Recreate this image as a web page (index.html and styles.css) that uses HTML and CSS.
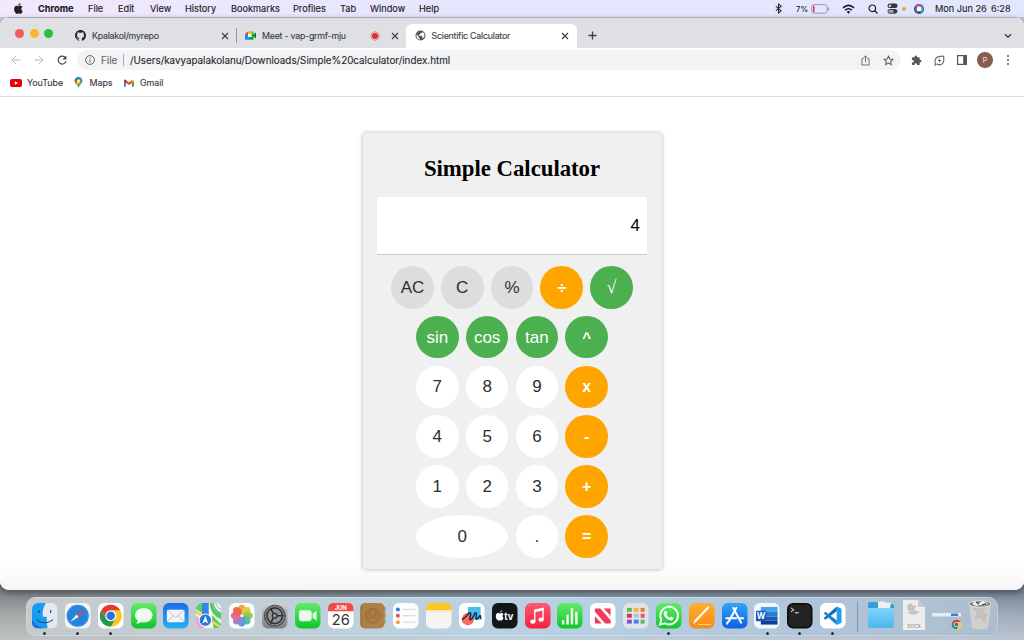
FILE: index.html
```html
<!DOCTYPE html>
<html lang="en">
<head>
<meta charset="utf-8">
<title>Scientific Calculator</title>
<link rel="stylesheet" href="styles.css">
</head>
<body>
<div class="desktop">
  <header class="menubar">
    <svg class="apple" viewBox="0 0 24 24"><path d="M17.2 12.800c0-2.500 2-3.700 2.100-3.800-1.200-1.700-3-1.900-3.600-1.900-1.500-.2-3 .9-3.700.9-.8 0-2-.9-3.200-.9-1.700 0-3.200 1-4.100 2.400-1.700 3-.4 7.500 1.300 10 .8 1.200 1.800 2.500 3.100 2.500 1.200-.1 1.700-.8 3.200-.8s1.900.8 3.200.8 2.200-1.200 3-2.400c1-1.400 1.300-2.700 1.400-2.800-.1 0-2.700-1-2.700-4zM14.700 5.500c.7-.8 1.200-2 1-3.200-1 .1-2.200.7-2.900 1.500-.6.7-1.200 1.900-1 3 1.100.1 2.200-.5 2.900-1.300z"/></svg>
    <nav class="menus"><b>Chrome</b><span>File</span><span>Edit</span><span>View</span><span>History</span><span>Bookmarks</span><span>Profiles</span><span>Tab</span><span>Window</span><span>Help</span></nav>
    <div class="status">
      <svg class="s-bt" viewBox="0 0 8 12"><path d="M1 3.500l6 5L4 11V1l3 2.500-6 5" fill="none" stroke="#222" stroke-width="1.200"/></svg>
      <span class="s-pct">7%</span>
      <svg class="s-bat" viewBox="0 0 19 10"><rect x=".6" y=".6" width="15.500" height="8.600" rx="2.500" fill="none" stroke="#99a" /><path d="M2 2h1.500v6H2z" fill="#f0284a"/><path d="M17.500 3.500v3" stroke="#99a" stroke-width="1.200"/></svg>
      <svg class="s-wifi" viewBox="0 0 14 11"><g fill="none" stroke="#16161c" stroke-width="1.800"><path d="M1 4.200Q7-1 13 4.200M3.300 6.700q3.700-3 7.400 0"/></g><path d="M5 8.500q2-1.500 4 0L7 10.600z" fill="#16161c"/></svg>
      <svg class="s-find" viewBox="0 0 10 10"><circle cx="4.300" cy="4.300" r="3.300" fill="none" stroke="#222" stroke-width="1.200"/><path d="M6.800 6.800L9.500 9.500" stroke="#222" stroke-width="1.300"/></svg>
      <svg class="s-cc" viewBox="0 0 11 11"><rect x=".5" y=".5" width="10" height="4.400" rx="2.200" fill="#333540"/><circle cx="2.900" cy="2.700" r="1.200" fill="#dde"/><rect x="1" y="6.500" width="9" height="3.700" rx="1.800" fill="#aab" stroke="#333540"/><circle cx="8" cy="8.300" r="1.700" fill="#333540"/></svg>
      <i class="s-dot"></i>
      <svg class="s-siri" viewBox="0 0 10 10"><circle cx="5" cy="5" r="5" fill="#463b75"/><path d="M1 3Q4-1 8 1.500L5 4Z" fill="#e65391"/><path d="M1 3Q0 7 4 9l1-4z" fill="#3778bd"/><path d="M8 1.500Q11 6 7 9L5 5z" fill="#38b9b1"/><circle cx="5" cy="5" r="2.400" fill="#fff"/></svg>
      <span class="s-date">Mon Jun 26</span><span class="s-time">6:28</span>
    </div>
  </header>

  <main class="window">
    <div class="tabs">
      <div class="lights"><i class="red"></i><i class="yellow"></i><i class="green"></i></div>
      <div class="tab tab-git">
        <svg class="fav" viewBox="0 0 16 16"><path fill="#24292f" d="M8 0C3.580 0 0 3.580 0 8c0 3.540 2.290 6.530 5.470 7.590.4.070.55-.17.550-.38v-1.490c-2.010.37-2.530-.49-2.690-.94-.09-.23-.48-.94-.82-1.130-.28-.15-.68-.52-.01-.53.63-.01 1.080.58 1.230.82.72 1.210 1.870.87 2.330.66.07-.52.28-.87.510-1.070-1.780-.2-3.640-.89-3.640-3.950 0-.87.31-1.590.82-2.150-.08-.2-.36-1.020.08-2.120 0 0 .67-.21 2.200.82a7.600 7.600 0 0 1 4 0c1.530-1.040 2.200-.82 2.200-.82.44 1.100.16 1.920.08 2.120.51.56.82 1.270.82 2.150 0 3.070-1.870 3.750-3.650 3.950.29.25.54.73.54 1.480v2.200c0 .21.15.46.55.38A8 8 0 0 0 16 8c0-4.420-3.580-8-8-8z"/></svg>
        <span class="tt">Kpalakol/myrepo</span>
        <svg class="x" viewBox="0 0 8 8"><path d="M1 1l6 6M7 1L1 7"/></svg>
      </div>
      <div class="tab tab-meet">
        <svg class="fav" viewBox="0 0 14 12"><path d="M0 4l4-3.500v3.500z" fill="#ea4335"/><path d="M4 .5h5.500v3.500H4z" fill="#fbbc04"/><path d="M9.500.5q1.500 0 1.500 1.500v8q0 1.500-1.500 1.500H4V8h4V4h1.500z" fill="#00ac47"/><path d="M10 6l4-4v8z" fill="#00832d"/><path d="M0 4h4v7.500H1.200Q0 11.500 0 10z" fill="#2684fc"/><path d="M4 4h4.300v4H4z" fill="#fff"/></svg>
        <span class="tt">Meet - vap-grmf-mju</span>
        <svg class="rec" viewBox="0 0 10 10"><circle cx="5" cy="5" r="4.200" fill="none" stroke="#e4736c" stroke-width=".9"/><circle cx="5" cy="5" r="3" fill="#d82d25"/></svg>
        <svg class="x" viewBox="0 0 8 8"><path d="M1 1l6 6M7 1L1 7"/></svg>
      </div>
      <div class="tab tab-calc">
        <svg class="fav" viewBox="0 0 24 24"><path fill="#53575b" d="M12 1a11 11 0 1 0 0 22 11 11 0 0 0 0-22zm-1 19.900A9 9 0 0 1 3.200 10L8 14.500v1.200c0 1.200 1 2.200 2.200 2.200zm7.500-3c-.3-.8-1-1.400-2-1.400h-1v-3c0-.6-.4-1-1-1H8v-2h2.200c.6 0 1-.5 1-1V7.200h2c1.200 0 2.200-1 2.200-2.200V3.800A9 9 0 0 1 18.500 17.900z"/></svg>
        <span class="tt">Scientific Calculator</span>
        <svg class="x" viewBox="0 0 8 8"><path d="M1 1l6 6M7 1L1 7"/></svg>
      </div>
      <svg class="plus" viewBox="0 0 10 10"><path d="M5 .5v9M.5 5h9"/></svg>
      <svg class="chev" viewBox="0 0 8 6"><path d="M1 1.200l3 3 3-3"/></svg>
    </div>

    <div class="toolbar">
      <svg class="nav" viewBox="0 0 10 10"><path d="M9.500 5H1M5 1L1 5l4 4" fill="none" stroke="#b5b7ba"/></svg>
      <svg class="nav" viewBox="0 0 10 10"><path d="M.5 5H9M5 1l4 4-4 4" fill="none" stroke="#b5b7ba"/></svg>
      <svg class="nav" viewBox="0 0 10 10"><path d="M8.600 3A4 4 0 1 0 9 6.200" fill="none" stroke="#45484c" stroke-width="1.200"/><path d="M9.400.4v4H5.400z" fill="#45484c"/></svg>
      <div class="omnibox">
        <svg class="info" viewBox="0 0 10 10"><circle cx="5" cy="5" r="4.400" fill="none" stroke="#5f6368"/><path d="M5 4.400v3M5 2.400v1.100" stroke="#5f6368" stroke-width="1.100"/></svg>
        <span class="scheme">File</span><i class="bar"></i><span class="url">/Users/kavyapalakolanu/Downloads/Simple%20calculator/index.html</span>
        <svg class="share" viewBox="0 0 10 12"><path d="M3 4H1v7h8V4H7M5 8V1M2.800 3L5 .9 7.200 3" fill="none" stroke="#63676b"/></svg>
        <svg class="star" viewBox="0 0 24 24"><path d="M12 2.500l2.900 6.300 6.800.7-5.100 4.600 1.500 6.800-6.100-3.500-6.100 3.500 1.500-6.800-5.100-4.600 6.800-.7z" fill="none" stroke="#56595d" stroke-width="2.200"/></svg>
      </div>
      <svg class="ext" viewBox="0 0 24 24"><path fill="#53565a" d="M20.500 11H19V7a2 2 0 0 0-2-2h-4V3.500a2.500 2.500 0 0 0-5 0V5H4a2 2 0 0 0-2 2v3.800h1.500a2.700 2.700 0 0 1 0 5.400H2V20c0 1.100.9 2 2 2h3.800v-1.500a2.700 2.700 0 0 1 5.400 0V22H17a2 2 0 0 0 2-2v-4h1.500a2.500 2.500 0 0 0 0-5z"/></svg>
      <svg class="leaf" viewBox="0 0 12 12"><path d="M1.500 10.500Q0 3 5 1.800q3-.8 5.500-.5.8 5-.5 7.200-2.500 3.700-7 1.300M.6 11.500l2-2" fill="none" stroke="#63666a" stroke-width="1.200"/><path d="M6.600 3L4 6.500h2L5.300 9 8 5.500H6z" fill="#63666a"/></svg>
      <svg class="side" viewBox="0 0 10 10"><rect x=".6" y=".6" width="8.800" height="8.800" fill="none" stroke="#505358" stroke-width="1.200"/><path d="M6.200 0H10v10H6.200z" fill="#505358"/></svg>
      <span class="avatar">P</span>
      <svg class="dots" viewBox="0 0 4 12"><g fill="#505358"><circle cx="2" cy="2" r="1"/><circle cx="2" cy="6" r="1"/><circle cx="2" cy="10" r="1"/></g></svg>
    </div>

    <div class="bookmarks">
      <svg class="yt" viewBox="0 0 12 8"><rect width="12" height="8" rx="2" fill="#e90000"/><path d="M4.800 2.200v3.600L8 4z" fill="#fff"/></svg><span class="b-yt">YouTube</span>
      <svg class="gm" viewBox="0 0 10 12"><path d="M5 0a4.300 4.300 0 0 0-4.300 4.500C.8 7.300 4 8.200 5 12 6 8.200 9.200 7.300 9.300 4.500A4.300 4.300 0 0 0 5 0z" fill="#34a853"/><path d="M1.700 1.700A4.300 4.300 0 0 1 5 0l1.500.3L3.300 4z" fill="#1a73e8"/><path d="M1.700 1.700L3.400 3.300 1.500 7A5 5 0 0 1 1.700 1.700z" fill="#ea4335"/><path d="M1.500 7l5-5 1 4-4.200 3z" fill="#fbbc04"/><path d="M6.500.3A4.300 4.300 0 0 1 9 3L6 6z" fill="#4285f4"/><circle cx="5" cy="4.200" r="1.500" fill="#fff"/></svg><span class="b-gm">Maps</span>
      <svg class="ml" viewBox="0 0 12 9"><path d="M0 1.500L2.500 3v6H.8Q0 9 0 8z" fill="#4285f4"/><path d="M9.500 3L12 1.500V8q0 1-.8 1H9.500z" fill="#34a853"/><path d="M2.500 1L6 3.800 9.500 1v3.400L6 7 2.500 4.400z" fill="#ea4335"/><path d="M0 1.500Q.3-.8 2.500 1v3.400L0 2.700z" fill="#b82c23"/><path d="M9.500 1Q11.700-.8 12 1.500v1.200L9.500 4.400z" fill="#fbbc04"/></svg><span>Gmail</span>
    </div>

    <section class="page">
      <div class="calculator">
        <h1>Simple Calculator</h1>
        <div class="display">4</div>
        <div class="keys">
          <div class="row"><button class="fn">AC</button><button class="fn">C</button><button class="fn">%</button><button class="op">÷</button><button class="sci root">√</button></div>
          <div class="row"><button class="sci">sin</button><button class="sci">cos</button><button class="sci">tan</button><button class="sci pow">^</button></div>
          <div class="row"><button>7</button><button>8</button><button>9</button><button class="op">x</button></div>
          <div class="row"><button>4</button><button>5</button><button>6</button><button class="op">-</button></div>
          <div class="row"><button>1</button><button>2</button><button>3</button><button class="op">+</button></div>
          <div class="row"><button class="zero">0</button><button>.</button><button class="op">=</button></div>
        </div>
      </div>
    </section>
  </main>

  <svg width="0" height="0" class="defs">
    <defs>
      <linearGradient id="gGreen" x2="0" y2="1"><stop stop-color="#62ec68"/><stop offset="1" stop-color="#10c52b"/></linearGradient>
      <linearGradient id="gBlue" x2="0" y2="1"><stop stop-color="#1c6deb"/><stop offset="1" stop-color="#27b0f5"/></linearGradient>
      <linearGradient id="gApp" x2="0" y2="1"><stop stop-color="#2aa7f5"/><stop offset="1" stop-color="#145de2"/></linearGradient>
      <linearGradient id="gRed" x2="0" y2="1"><stop stop-color="#fb5a73"/><stop offset="1" stop-color="#f91f3d"/></linearGradient>
      <linearGradient id="gOr" x2="0" y2="1"><stop stop-color="#ffb02b"/><stop offset="1" stop-color="#fa8918"/></linearGradient>
      <linearGradient id="gGray" x2="0" y2="1"><stop stop-color="#d3d3d3"/><stop offset="1" stop-color="#7b7d80"/></linearGradient>
      <linearGradient id="gFold" x2="0" y2="1"><stop stop-color="#7cd5fb"/><stop offset="1" stop-color="#4fb5ec"/></linearGradient>
      <clipPath id="tile"><rect width="26" height="26" rx="6"/></clipPath>
      <g id="chrome"><circle r="10" fill="#fff"/><path d="M0 0L-8.660-5A10 10 0 0 1 8.660-5z" fill="#e33b2e"/><path d="M0 0L8.660-5A10 10 0 0 1 0 10z" fill="#fcc620"/><path d="M0-5h8.700L4.300 2.500z" fill="#fcc620"/><path d="M-8.660-5l4.330 7.500L0-5z" fill="#e33b2e"/><path d="M-8.660-5L-4.330 2.500 4.330 2.500 0 10A10 10 0 0 1-8.660-5z" fill="#279847"/><circle r="5" fill="#fff"/><circle r="3.900" fill="#2474e5"/></g>
    </defs>
  </svg>

  <footer class="dock">
    <div class="app run"><svg viewBox="0 0 26 26"><g clip-path="url(#tile)"><path d="M0 0h26v26H0z" fill="#e4e9ef"/><path d="M0 0h14q-4 7-3 14h4q-.5 6 1 12H0z" fill="#1b9af4"/><path d="M0 17q6 9 15 9H0z" fill="#1372db"/><path d="M7 7.500v2.500M19 7.500v2.500" stroke="#15334f" stroke-width="1.200"/><path d="M4.500 17q8.500 6.500 17 0" fill="none" stroke="#17406a" stroke-width="1"/></g></svg></div>
    <div class="app run"><svg viewBox="0 0 26 26"><rect width="26" height="26" rx="6" fill="#f1f3f5"/><circle cx="13" cy="13" r="11.300" fill="#2383df"/><circle cx="13" cy="13" r="10" fill="none" stroke="#62b6ef" stroke-width="1" stroke-dasharray=".5 1.500"/><path d="M21 6.500l-7.200 7.700-2-2.600z" fill="#f14436"/><path d="M5 19.500l6.800-7.900 2 2.600z" fill="#f5f5f5"/></svg></div>
    <div class="app run"><svg viewBox="0 0 26 26"><rect width="26" height="26" rx="6" fill="#fff"/><use href="#chrome" transform="translate(13 13) scale(1.120)"/></svg></div>
    <div class="app"><svg viewBox="0 0 26 26"><rect width="26" height="26" rx="6" fill="url(#gGreen)"/><ellipse cx="13" cy="12.500" rx="9" ry="7.500" fill="#eefaee"/><path d="M7 17q0 3-2 4 4 0 5.500-2z" fill="#eefaee"/></svg></div>
    <div class="app"><svg viewBox="0 0 26 26"><rect width="26" height="26" rx="6" fill="url(#gBlue)"/><rect x="4" y="7" width="18" height="12.500" rx="1.500" fill="#f3f5f7"/><path d="M4.500 7.500L13 15l8.500-7.500M4.500 19l6-6.300M21.500 19l-6-6.300" fill="none" stroke="#a7b3bf" stroke-width=".8"/></svg></div>
    <div class="app"><svg viewBox="0 0 26 26"><g clip-path="url(#tile)"><path d="M0 0h26v26H0z" fill="#f3f2ed"/><path d="M0 0h6v10L0 6z" fill="#58cf67"/><path d="M14 0h4q2 8 8 10v7Q14 12 14 0z" fill="#51cb63"/><path d="M16 12l10 10v4h-8z" fill="#5acd64"/><path d="M0 13l8 6v7H0z" fill="#f1a0ce"/><path d="M17 0q1 8 9 10M20 0q1 5 6 7" stroke="#a9b4b8" fill="none"/><path d="M6 0h7v13H6z" fill="#3485e5"/><path d="M0 7l26 17v2L0 11z" fill="#fad25e"/><circle cx="9.500" cy="17.500" r="6.300" fill="#2477de" stroke="#fff"/><path d="M9.500 13l3 8-3-2-3 2z" fill="#fff"/></g></svg></div>
    <div class="app"><svg viewBox="0 0 26 26"><rect width="26" height="26" rx="6" fill="#fcfcfc"/><g transform="translate(13 13)" opacity=".9"><ellipse cy="-6.300" rx="4" ry="4.900" fill="#f89a22"/><ellipse cy="-6.300" rx="4" ry="4.900" fill="#dbc928" transform="rotate(45)"/><ellipse cy="-6.300" rx="4" ry="4.900" fill="#84c83d" transform="rotate(90)"/><ellipse cy="-6.300" rx="4" ry="4.900" fill="#48b996" transform="rotate(135)"/><ellipse cy="-6.300" rx="4" ry="4.900" fill="#518fd8" transform="rotate(180)"/><ellipse cy="-6.300" rx="4" ry="4.900" fill="#9b72bf" transform="rotate(225)"/><ellipse cy="-6.300" rx="4" ry="4.900" fill="#dd6388" transform="rotate(270)"/><ellipse cy="-6.300" rx="4" ry="4.900" fill="#ef5640" transform="rotate(315)"/></g></svg></div>
    <div class="app"><svg viewBox="0 0 26 26"><rect width="26" height="26" rx="6" fill="url(#gGray)"/><circle cx="13" cy="13" r="10.500" fill="#929497" stroke="#3d3f42" stroke-width="1.600" stroke-dasharray="1.200 .5"/><circle cx="13" cy="13" r="8" fill="#929497" stroke="#303235" stroke-width="1.600"/><circle cx="13" cy="13" r="2.500" fill="none" stroke="#303235" stroke-width="1.300"/><path d="M15.500 13h6.500M11.500 10.500L8.500 5M11.500 15.500l-3 5.500" stroke="#303235" stroke-width="1.600"/></svg></div>
    <div class="app"><svg viewBox="0 0 26 26"><rect width="26" height="26" rx="6" fill="url(#gGreen)"/><rect x="4" y="7.500" width="13" height="11" rx="2.500" fill="#edf9ec"/><path d="M18 11l4-3v10l-4-3z" fill="#edf9ec"/></svg></div>
    <div class="app"><svg viewBox="0 0 26 26"><rect width="26" height="26" rx="6" fill="#fff"/><path d="M6 0h14q6 0 6 6v2.500H0V6q0-6 6-6z" fill="#f24b42"/><text x="13" y="6.800" text-anchor="middle" class="cal-m">JUN</text><text x="13" y="22" text-anchor="middle" class="cal-d">26</text></svg></div>
    <div class="app"><svg viewBox="0 0 26 26"><path d="M24 4h2v5h-2z" fill="#8b9299"/><path d="M24 10h2v5h-2z" fill="#c98d48"/><path d="M24 16h2v5h-2z" fill="#8fa282"/><rect width="25" height="26" rx="5" fill="#b08147"/><path d="M2 2v22" stroke="#9d713b"/><circle cx="13" cy="13" r="7.500" fill="#a7783f" stroke="#956a35"/><circle cx="13" cy="10.500" r="2.800" fill="#b08147" stroke="#956a35" stroke-width=".6"/><path d="M8 18q5-6.500 10 0-5 4-10 0z" fill="#b08147" stroke="#956a35" stroke-width=".6"/></svg></div>
    <div class="app"><svg viewBox="0 0 26 26"><rect width="26" height="26" rx="6" fill="#fdfdfd"/><path d="M10 6.500h13M10 13h13M10 19.500h13" stroke="#c7c9cc" stroke-width=".8"/><circle cx="5" cy="6.500" r="2" fill="#2878e5"/><circle cx="5" cy="13" r="2" fill="#e74e4a"/><circle cx="5" cy="19.500" r="2" fill="#f69b37"/></svg></div>
    <div class="app"><svg viewBox="0 0 26 26"><rect width="26" height="26" rx="6" fill="#f6f5f1"/><path d="M6 0h14q6 0 6 6v1.500H0V6q0-6 6-6z" fill="#fdc720"/><path d="M1 9h24" stroke="#bbb6aa" stroke-width=".6" stroke-dasharray=".7 .7"/></svg></div>
    <div class="app"><svg viewBox="0 0 26 26"><rect width="26" height="26" rx="6" fill="#fff"/><path d="M9 4h13v13H9z" fill="#45c0ec"/><circle cx="9" cy="16.500" r="6.200" fill="#f96c56"/><path d="M3 17c5-2 6-7 8-7 3 0-2 8 1 7 3-1 3-7 5-7s-1 7 1 6.500c2 0 2-3.500 3.500-3.500s-1 3 1.500 3" fill="none" stroke="#14294e" stroke-width="1.500"/></svg></div>
    <div class="app"><svg viewBox="0 0 26 26"><rect width="26" height="26" rx="6" fill="#101719"/><path d="M10.600 14.300c0-1.300.9-1.900 1-2-.7-.9-1.600-1-1.900-1-.8 0-1.500.5-1.900.5s-1-.5-1.600-.5c-3.500.2-3.200 6 0 7.600.7.300 1-.3 1.700-.3s1 .5 1.700.3c.9-.2 1.700-1.600 1.900-2.500-.6-.3-.9-1-.9-2.100zM8 10.900q.2-2 2-2.500 0 2-2 2.500z" fill="#fff" transform="translate(.2 -1)"/><text x="12.500" y="17" class="tv">tv</text></svg></div>
    <div class="app"><svg viewBox="0 0 26 26"><rect width="26" height="26" rx="6" fill="url(#gRed)"/><path d="M10 6.500l9-2v3l-9 2z" fill="#fff"/><path d="M10 7v12M18.400 5v12" stroke="#fff" stroke-width="1.300"/><ellipse cx="8" cy="19" rx="2.700" ry="2.100" fill="#fff"/><ellipse cx="16.400" cy="17" rx="2.700" ry="2.100" fill="#fff"/></svg></div>
    <div class="app"><svg viewBox="0 0 26 26"><rect width="26" height="26" rx="6" fill="url(#gGreen)"/><path d="M5 17.500h2.500V22H5zM9.500 12H12v10H9.500zM14 5h2.500v17H14zM18.500 9H21v13h-2.500z" fill="#effdec"/></svg></div>
    <div class="app"><svg viewBox="0 0 26 26"><rect width="26" height="26" rx="6" fill="#fff"/><path d="M5 5.500h5.500L21 17.500v3.500h-5.500L5 9z" fill="#f03b59"/><path d="M14 5.500h7V13zM5 13.500l7 7.500H5z" fill="#f03b59"/></svg></div>
    <div class="app"><svg viewBox="0 0 26 26"><rect width="26" height="26" rx="6" fill="#e0e4e8"/><path d="M4 5h5v4H4z" fill="#53bd58"/><path d="M11 5h5v4h-5z" fill="#f6b52e"/><path d="M18 5h4v4h-4z" fill="#e37b32"/><path d="M4 11h5v4H4z" fill="#d33943"/><path d="M11 11h5v4h-5z" fill="#b9c2c8"/><path d="M18 11h4v4h-4z" fill="#f54e7a"/><path d="M4 17h5v4H4z" fill="#8c4bd9"/><path d="M11 17h5v4h-5z" fill="#3985ec"/><path d="M18 17h4v4h-4z" fill="#54bf53"/></svg></div>
    <div class="app run"><svg viewBox="0 0 26 26"><rect width="26" height="26" rx="6" fill="url(#gGreen)"/><path d="M4 22l1.400-5A9 9 0 1 1 9 20.700z" fill="none" stroke="#fff" stroke-width="1.900"/><path d="M9 8.200q1.300-1 2 .5l.7 1.800-1 1.300q1 2.300 3.400 3.200l1.200-1.300 2.700 1.300q-.2 3-3.200 2.700-6-1.300-7-7 .1-1.500 1.200-2.500z" fill="#fff"/></svg></div>
    <div class="app"><svg viewBox="0 0 26 26"><rect width="26" height="26" rx="6" fill="url(#gOr)"/><path d="M20.500 4.500L8 18l-3 3 1-3.500L19 4z" fill="#fff" stroke="#fff" stroke-width=".8"/><path d="M9 22h13" stroke="#ffd7a0"/></svg></div>
    <div class="app"><svg viewBox="0 0 26 26"><rect width="26" height="26" rx="6" fill="url(#gApp)"/><path d="M14.500 5L7 18.500M11.500 5l8 15M4.500 15.500h10M18.500 15.500h3M6 19.500l-.8 1.500" stroke="#fff" stroke-width="2.100" stroke-linecap="round"/></svg></div>
    <div class="app run"><svg viewBox="0 0 26 26"><rect width="26" height="26" rx="6" fill="#f4f7fb"/><path d="M7 4h17v5H7z" fill="#41a5ee"/><path d="M7 9h17v5H7z" fill="#2b7cd3"/><path d="M7 14h17v4H7z" fill="#185abd"/><path d="M7 18h17v4H7z" fill="#103f91"/><rect x="2" y="8" width="10.500" height="10.500" rx="1" fill="#185abd"/><text x="7.200" y="16.200" text-anchor="middle" class="word">W</text></svg></div>
    <div class="app run"><svg viewBox="0 0 26 26"><rect x=".8" y=".8" width="24.400" height="24.400" rx="5.500" fill="#232323" stroke="#0c0c0c" stroke-width="1.600"/><path d="M4 5l3 2-3 2M8 10h4" fill="none" stroke="#f2f2f2" stroke-width="1"/></svg></div>
    <div class="app run"><svg viewBox="0 0 26 26"><rect width="26" height="26" rx="6" fill="#fff"/><path d="M17 3.500l5 2.300v14.400l-5 2.300z" fill="#2a9df0"/><path d="M17 3.500L3.700 15.500l1.800 1.700L17 8.500z" fill="#0f6cb6"/><path d="M17 22.500L3.700 10.500l1.800-1.700L17 17.500z" fill="#1583d0"/></svg></div>
    <i class="sep"></i>
    <div class="app big"><svg viewBox="0 0 28 30"><path d="M1 4q0-2 2-2h7l2 2h13q2 0 2 2v3H1z" fill="#319fd6"/><path d="M11 2l6-1v7h-6zM17 2l7 1-1 5h-6z" fill="#eef0f0"/><path d="M1 8h26v18q0 2-2 2H3q-2 0-2-2z" fill="url(#gFold)"/></svg></div>
    <div class="app big"><svg viewBox="0 0 28 30"><path d="M3 0h15l7 7v23H3z" fill="#ededeb"/><path d="M18 0v7h7z" fill="#c9c9c7"/><path d="M7 5l4-2 3 3 3-1-3 5-6 1zM7 13l6-3 7 2-6 3z" fill="#c3c5c4"/><text x="14" y="27.500" text-anchor="middle" class="docx">DOCX</text></svg></div>
    <div class="app big"><svg viewBox="0 0 28 30"><path d="M-1 13h29v3.500H-1z" fill="#e5ebf2"/><path d="M18 13.500h7v2.500h-7z" fill="#387ddf"/><use href="#chrome" transform="translate(23.500 24.500) scale(.5)"/></svg></div>
    <div class="app big"><svg viewBox="0 0 28 30"><path d="M3 3h22l-3 25q-8 3-16 0z" fill="#d0d0ce"/><path d="M6 8l5 5-3 7 6-3 5 7 2-10-4-3 4-4z" fill="#bcbab7" opacity=".7"/><ellipse cx="14" cy="4" rx="11" ry="3.200" fill="#777873" stroke="#e7e8e8"/><path d="M6 4l3-3 4 2 4-2 5 3-4 2-4-1-4 1z" fill="#f2f0ed"/><path d="M10 2l3 2M16 5l4-1" stroke="#493e38" stroke-width="1.500"/></svg></div>
  </footer>
</div>
</body>
</html>
```
FILE: styles.css
```css
* { box-sizing: border-box; }
body { margin: 0; font-family: Inter, "Liberation Sans", sans-serif; }
svg { display: block; flex: none; overflow: visible; }
.desktop {
  width: 1024px; height: 640px; overflow: hidden; display: flex; flex-direction: column;
  background:
    linear-gradient(#e9ddf5, #b9a9c4) 0 0 / 100% 30px no-repeat,
    linear-gradient(rgba(60,70,80,.5), rgba(60,70,80,0) 55%, rgba(255,255,255,.3)) 0 585px / 100% 55px no-repeat,
    linear-gradient(90deg, #a5a9a9, #a8b3b9 25%, #a7bfce 50%, #a2b4c4 75%, #a0acbd);
}

/* menu bar */
.menubar { height: 17px; flex: none; display: flex; align-items: center; background: linear-gradient(90deg, #f2e9fc, #e6e6fd 40%, #e2e7fe); color: #1c1a24; font-size: 9.2px; }
.apple { width: 13px; height: 13px; margin-left: 12px; fill: #222; }
.menus { margin-left: 13px; display: grid; grid-template-columns: 50px 30px 32px 35px 46px 62px 47px 30px 49px 40px; white-space: nowrap; -webkit-text-stroke: .15px #1c1a24; }
.menus b { font-weight: 700; font-size: 9.2px; }
.status { margin-left: auto; margin-right: 14px; display: flex; align-items: center; white-space: nowrap; -webkit-text-stroke: .1px #1c1a24; }
.s-bt { width: 7px; height: 11px; margin-right: 14px; }
.s-pct { font-size: 7.800px; width: 15px; }
.s-bat { width: 19px; height: 10px; margin-right: 12px; }
.s-wifi { width: 13px; height: 10px; margin-right: 13px; }
.s-find { width: 10px; height: 10px; margin-right: 9px; }
.s-cc { width: 11px; height: 11px; margin-right: 4px; }
.s-dot { width: 4px; height: 4px; border-radius: 50%; background: #e4a650; margin-right: 8px; }
.s-siri { width: 10px; height: 10px; margin-right: 11px; }
.s-date { width: 56px; }
.s-time { width: 19px; }

/* browser window */
.window { height: 573px; flex: none; display: flex; flex-direction: column; background: #fff; border-radius: 9px; overflow: hidden; box-shadow: 0 3px 6px rgba(30,35,45,.5); }
.tabs { height: 31px; flex: none; display: flex; align-items: stretch; background: #dfe0e4; border-top: 1px solid #a9a8b4; font-size: 8.800px; letter-spacing: -.22px; color: #3c3f43; -webkit-text-stroke: .12px #3c3f43; }
.lights { display: flex; gap: 5.500px; padding: 11px 0 0 15px; width: 75px; }
.lights i { width: 9px; height: 9px; border-radius: 50%; }
.red { background: #f35b54; }
.yellow { background: #f7b731; }
.green { background: #27c13f; }
.tab { display: flex; align-items: center; padding-top: 5px; white-space: nowrap; }
.tab .x { width: 8px; height: 8px; margin-left: auto; }
.x path, .plus path, .chev path { fill: none; stroke: #3c4043; stroke-width: 1.200; }
.tab-git { width: 154px; }
.fav { width: 11px; height: 11px; margin-right: 6px; }
.tab-meet { width: 170px; margin-left: 7px; padding-left: 9px; padding-right: 7px; background: linear-gradient(#969aa0, #969aa0) 0 10px / 1px 15px no-repeat; }
.tab-meet .rec { width: 10px; height: 10px; margin-left: auto; }
.tab-meet .x { margin-left: 11px; }
.tab-calc { width: 171px; margin-top: 6px; padding: 0 8px 1px 9px; background: #fff; border-radius: 6px 6px 0 0; }
.tab-calc .fav { margin-right: 5.500px; }
.plus { width: 9px; height: 9px; margin: 13px 0 0 11px; }
.chev { width: 8px; height: 6px; margin: 15px 12px 0 auto; }
.plus path, .chev path { stroke-width: 1.500; }
.toolbar { height: 25px; flex: none; display: flex; align-items: center; padding-left: 10.500px; padding-bottom: .8px; }
.nav { width: 10px; height: 10px; margin-right: 13px; }
.nav:nth-child(3) { margin-right: 10.500px; }
.omnibox { width: 824px; height: 20px; border-radius: 10px; background: #f1f3f4; display: flex; align-items: center; padding: 0 7px 0 8px; font-size: 9.830px; color: #27292c; white-space: nowrap; -webkit-text-stroke: .12px #27292c; }
.info { width: 10px; height: 10px; margin-right: 6px; }
.scheme { width: 22px; color: #63676b; -webkit-text-stroke-color: #63676b; }
.bar { width: 1px; height: 12px; background: #a9acb0; margin-right: 6px; }
.share { width: 9px; height: 11px; margin-left: auto; margin-right: 13px; }
.star { width: 11px; height: 11px; }
.ext { width: 11px; height: 11px; margin-left: 10px; }
.leaf { width: 11px; height: 11px; margin-left: 12px; }
.side { width: 10px; height: 10px; margin-left: 12px; }
.avatar { width: 16px; height: 16px; margin-left: 10px; border-radius: 50%; background: #845e51; color: #f4dcd2; font-size: 8px; line-height: 16px; text-align: center; }
.dots { width: 4px; height: 12px; margin-left: 12.500px; }
.bookmarks { height: 24px; flex: none; display: flex; align-items: center; padding-left: 10px; padding-bottom: 4px; border-bottom: 1px solid #dcdddf; font-size: 8.900px; letter-spacing: -.05px; color: #33363a; -webkit-text-stroke: .1px #33363a; }
.yt { width: 12px; height: 8px; margin-right: 5px; }
.b-yt { width: 47px; }
.gm { width: 9px; height: 11px; margin-right: 6.500px; }
.b-gm { width: 34px; }
.ml { width: 10px; height: 8px; margin-right: 6.500px; }

/* calculator page */
.page { flex: 1; padding-top: 35.500px; background: linear-gradient(#fff 94%, #f5f5f5); }
.calculator { width: 299px; height: 436px; margin: 0 auto; padding: 14.500px; background: #f0f0f0; border-radius: 3.500px; box-shadow: 0 0 4px rgba(0,0,0,.32); display: flex; flex-direction: column; }
h1 { margin: 7px 0 14px; height: 29px; font: bold 22.800px/29px "Liberation Serif", serif; letter-spacing: -.03px; text-align: center; color: #000; }
.display { height: 58px; flex: none; background: #fff; border-bottom: 1px solid #ccc; padding-right: 7px; font: 17px/57px "Liberation Sans", sans-serif; text-align: right; color: #000; }
.keys { margin-top: 11px; display: flex; flex-direction: column; gap: 7.200px; }
.row { display: flex; justify-content: center; gap: 7.200px; }
button { width: 42.600px; height: 42.600px; padding: 1px 0 0; border: 0; border-radius: 50%; background: #fff; color: #2e2e2e; font: 17px "Liberation Sans", sans-serif; }
.fn { background: #ddd; }
.op { background: #ffa500; color: #fff; font-weight: bold; font-size: 16px; }
.sci { background: #4caf50; color: #fff; }
.root { font: bold 18px "Liberation Serif", serif; }
.pow { font-weight: bold; font-size: 15px; }
.zero { width: 92.400px; }

/* dock */
.dock { width: 972px; height: 39px; flex: none; margin: 7px 0 0 26px; border-radius: 10px; padding-left: 2.500px; display: flex; background: linear-gradient(90deg, #c5cacb, #bdd1de 35%, #b7d0e3 55%, #adbdd0); box-shadow: inset 0 0 0 .5px rgba(255,255,255,.5); }
.app { width: 32.830px; flex: none; display: flex; flex-direction: column; align-items: center; padding-top: 6px; }
.app svg { width: 25.500px; height: 25.500px; }
.run::after { content: ""; width: 3px; height: 3px; border-radius: 50%; background: #263340; margin-top: 3.500px; }
.app.big { padding-top: 3px; }
.app.big svg { width: 28px; height: 30px; }
.sep { width: 1px; height: 31px; margin: 4px 7px 0 7.500px; background: #8795a5; }
.cal-m { font: bold 6px Inter, sans-serif; fill: #fff; }
.cal-d { font: 15px Inter, sans-serif; fill: #333; }
.tv { font: bold 9.500px Inter, sans-serif; fill: #fff; }
.word { font: bold 8.500px Inter, sans-serif; fill: #fff; }
.docx { font: 4.500px Inter, sans-serif; fill: #777; }
```
